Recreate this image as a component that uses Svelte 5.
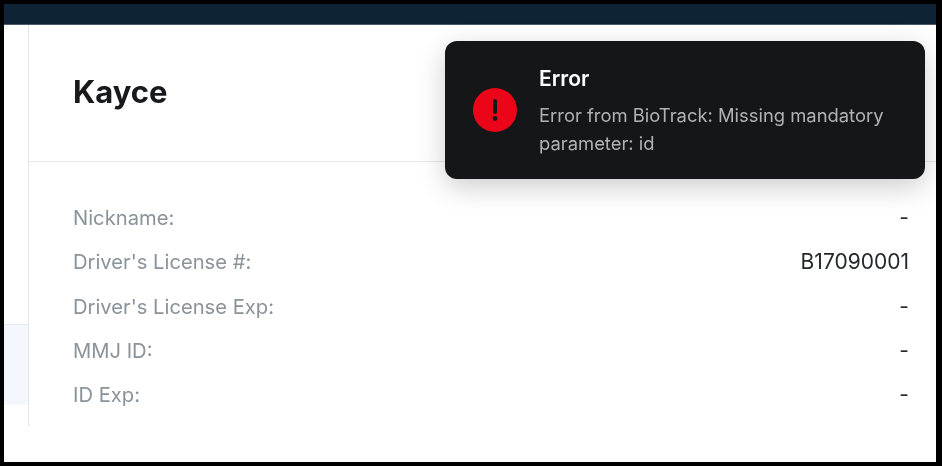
<script>
  const rows = [
    ["Nickname:", "-"],
    ["Driver's License #:", "B17090001"],
    ["Driver's License Exp:", "-"],
    ["MMJ ID:", "-"],
    ["ID Exp:", "-"]
  ];
</script>

<div class="frame">
  <div class="screen">
    <div class="topbar"></div>
    <div class="main">
      <aside class="side">
        <div class="side-active"></div>
      </aside>
      <section class="panel">
        <header class="head"><h1>Kayce</h1></header>
        <dl class="rows">
          {#each rows as [label, value]}
            <div class="row">
              <dt>{label}</dt>
              <dd>{value}</dd>
            </div>
          {/each}
        </dl>
      </section>
    </div>
    <div class="toast">
      <svg class="icon" viewBox="0 0 44 44" width="44" height="44" aria-hidden="true">
        <circle cx="22" cy="22" r="22" fill="#ec0518" />
        <rect x="20" y="11" width="4" height="15" rx="2" fill="#141618" />
        <circle cx="22" cy="30.5" r="2.4" fill="#141618" />
      </svg>
      <div class="msg">
        <div class="title">Error</div>
        <div class="text">Error from BioTrack: Missing mandatory parameter: id</div>
      </div>
    </div>
  </div>
</div>

<style>
  :global(body) {
    margin: 0;
    background: #000;
  }
  .frame {
    width: 942px;
    height: 466px;
    box-sizing: border-box;
    padding: 4px 6px 4px 4px;
    background: #000;
    font-family: Inter, "Noto Sans", sans-serif;
    overflow: hidden;
  }
  .screen {
    position: relative;
    height: 100%;
    background: #fff;
    display: flex;
    flex-direction: column;
    overflow: hidden;
    filter: blur(0.35px);
  }
  .topbar {
    height: 21px;
    flex: none;
    background: #0f2337;
    border-bottom: 1px solid #4a5a6a;
    box-sizing: border-box;
  }
  .main {
    display: flex;
    height: 401px;
    flex: none;
  }
  .side {
    width: 24px;
    flex: none;
    padding-top: 299px;
    box-sizing: border-box;
  }
  .side-active {
    height: 81px;
    background: #f4f7fe;
    border-top: 1px solid #e6e9ec;
    box-sizing: border-box;
  }
  .panel {
    flex: 1;
    border-left: 1px solid #e4e7e9;
    min-width: 0;
  }
  .head {
    height: 137px;
    box-sizing: border-box;
    border-bottom: 1px solid #e4e7e9;
    padding: 0 0 4px 44px;
    display: flex;
    align-items: center;
  }
  h1 {
    margin: 0;
    font-size: 31px;
    font-weight: 700;
    color: #17191c;
  }
  .rows {
    margin: 0;
    padding: 42px 27px 0 44px;
    display: flex;
    flex-direction: column;
    gap: 17.3px;
  }
  .row {
    display: flex;
    justify-content: space-between;
    height: 27px;
    line-height: 27px;
    font-size: 20.2px;
  }
  dt {
    color: #8a9399;
  }
  dd {
    margin: 0;
    color: #25282b;
    font-size: 21px;
  }
  .toast {
    position: absolute;
    left: 441px;
    top: 37px;
    width: 480px;
    height: 138px;
    box-sizing: border-box;
    padding: 0 28px;
    display: flex;
    align-items: center;
    gap: 22px;
    background: #141618;
    border-radius: 12px;
    box-shadow: 0 8px 28px rgba(0, 0, 0, 0.2);
  }
  .icon {
    flex: none;
  }
  .msg {
    margin-top: 3px;
  }
  .title {
    color: #fff;
    font-size: 21px;
    font-weight: 600;
    line-height: 26px;
    margin-bottom: 9px;
  }
  .text {
    color: #b0b3b5;
    font-size: 18.4px;
    line-height: 28px;
  }
</style>
